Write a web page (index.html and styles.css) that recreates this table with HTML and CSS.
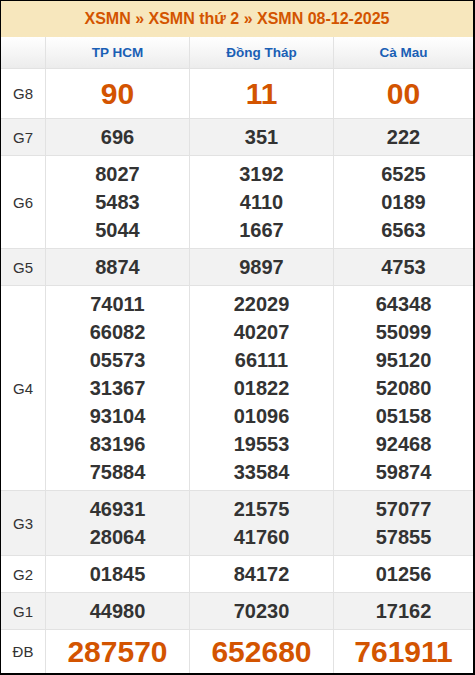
FILE: index.html
```html
<!DOCTYPE html>
<html lang="vi">
<head>
<meta charset="utf-8">
<title>XSMN 08-12-2025</title>
<link rel="stylesheet" href="styles.css">
</head>
<body>
<div class="board">
  <div class="title">XSMN » XSMN thứ 2 » XSMN 08-12-2025</div>
  <div class="grid">
    <div class="row head">
      <div class="cell"></div>
      <div class="cell prov">TP HCM</div>
      <div class="cell prov">Đồng Tháp</div>
      <div class="cell prov">Cà Mau</div>
    </div>
    <div class="row big g8">
      <div class="cell lbl">G8</div>
      <div class="cell num">90</div>
      <div class="cell num">11</div>
      <div class="cell num">00</div>
    </div>
    <div class="row alt">
      <div class="cell lbl">G7</div>
      <div class="cell num">696</div>
      <div class="cell num">351</div>
      <div class="cell num">222</div>
    </div>
    <div class="row">
      <div class="cell lbl">G6</div>
      <div class="cell num"><span>8027</span><span>5483</span><span>5044</span></div>
      <div class="cell num"><span>3192</span><span>4110</span><span>1667</span></div>
      <div class="cell num"><span>6525</span><span>0189</span><span>6563</span></div>
    </div>
    <div class="row alt">
      <div class="cell lbl">G5</div>
      <div class="cell num">8874</div>
      <div class="cell num">9897</div>
      <div class="cell num">4753</div>
    </div>
    <div class="row">
      <div class="cell lbl">G4</div>
      <div class="cell num"><span>74011</span><span>66082</span><span>05573</span><span>31367</span><span>93104</span><span>83196</span><span>75884</span></div>
      <div class="cell num"><span>22029</span><span>40207</span><span>66111</span><span>01822</span><span>01096</span><span>19553</span><span>33584</span></div>
      <div class="cell num"><span>64348</span><span>55099</span><span>95120</span><span>52080</span><span>05158</span><span>92468</span><span>59874</span></div>
    </div>
    <div class="row alt">
      <div class="cell lbl">G3</div>
      <div class="cell num"><span>46931</span><span>28064</span></div>
      <div class="cell num"><span>21575</span><span>41760</span></div>
      <div class="cell num"><span>57077</span><span>57855</span></div>
    </div>
    <div class="row">
      <div class="cell lbl">G2</div>
      <div class="cell num">01845</div>
      <div class="cell num">84172</div>
      <div class="cell num">01256</div>
    </div>
    <div class="row alt">
      <div class="cell lbl">G1</div>
      <div class="cell num">44980</div>
      <div class="cell num">70230</div>
      <div class="cell num">17162</div>
    </div>
    <div class="row big db">
      <div class="cell lbl">ĐB</div>
      <div class="cell num">287570</div>
      <div class="cell num">652680</div>
      <div class="cell num">761911</div>
    </div>
  </div>
</div>
</body>
</html>
```

FILE: styles.css
```css
html, body {
  margin: 0;
  padding: 0;
  background: #fff;
}

body {
  font-family: "Liberation Sans", Arial, sans-serif;
}

.board {
  width: 472px;
  height: 672px;
  border-left: 1px solid #000;
  border-top: 1px solid #000;
  border-right: 2px solid #000;
  border-bottom: 2px solid #000;
  overflow: hidden;
}

.title {
  height: 36px;
  background: #f7e7bd;
  color: #d35400;
  font-weight: bold;
  font-size: 16px;
  line-height: 36px;
  text-align: center;
}

.grid {
  display: grid;
  grid-template-columns: 44px 143px 143px 139px;
  grid-template-rows: 31px 49px 36px 92px 36px 204px 64px 36px 36px 43px;
  gap: 1px;
  background: #e2e2e2;
}

.row {
  display: contents;
}

.cell {
  background: #fff;
  display: flex;
  flex-direction: column;
  align-items: center;
  justify-content: center;
  text-align: center;
}

.alt > .cell {
  background: #f2f2f2;
}

.head > .cell {
  background: linear-gradient(#ffffff, #ececec);
}

.prov {
  color: #1a5fb5;
  font-weight: bold;
  font-size: 13.5px;
}

.lbl {
  color: #333;
  font-size: 15px;
}

.num {
  color: #333;
  font-weight: bold;
  font-size: 20px;
  line-height: 28px;
}

.num span {
  display: block;
}

.big .num {
  color: #d35400;
  font-size: 30px;
  line-height: 34px;
}
```
